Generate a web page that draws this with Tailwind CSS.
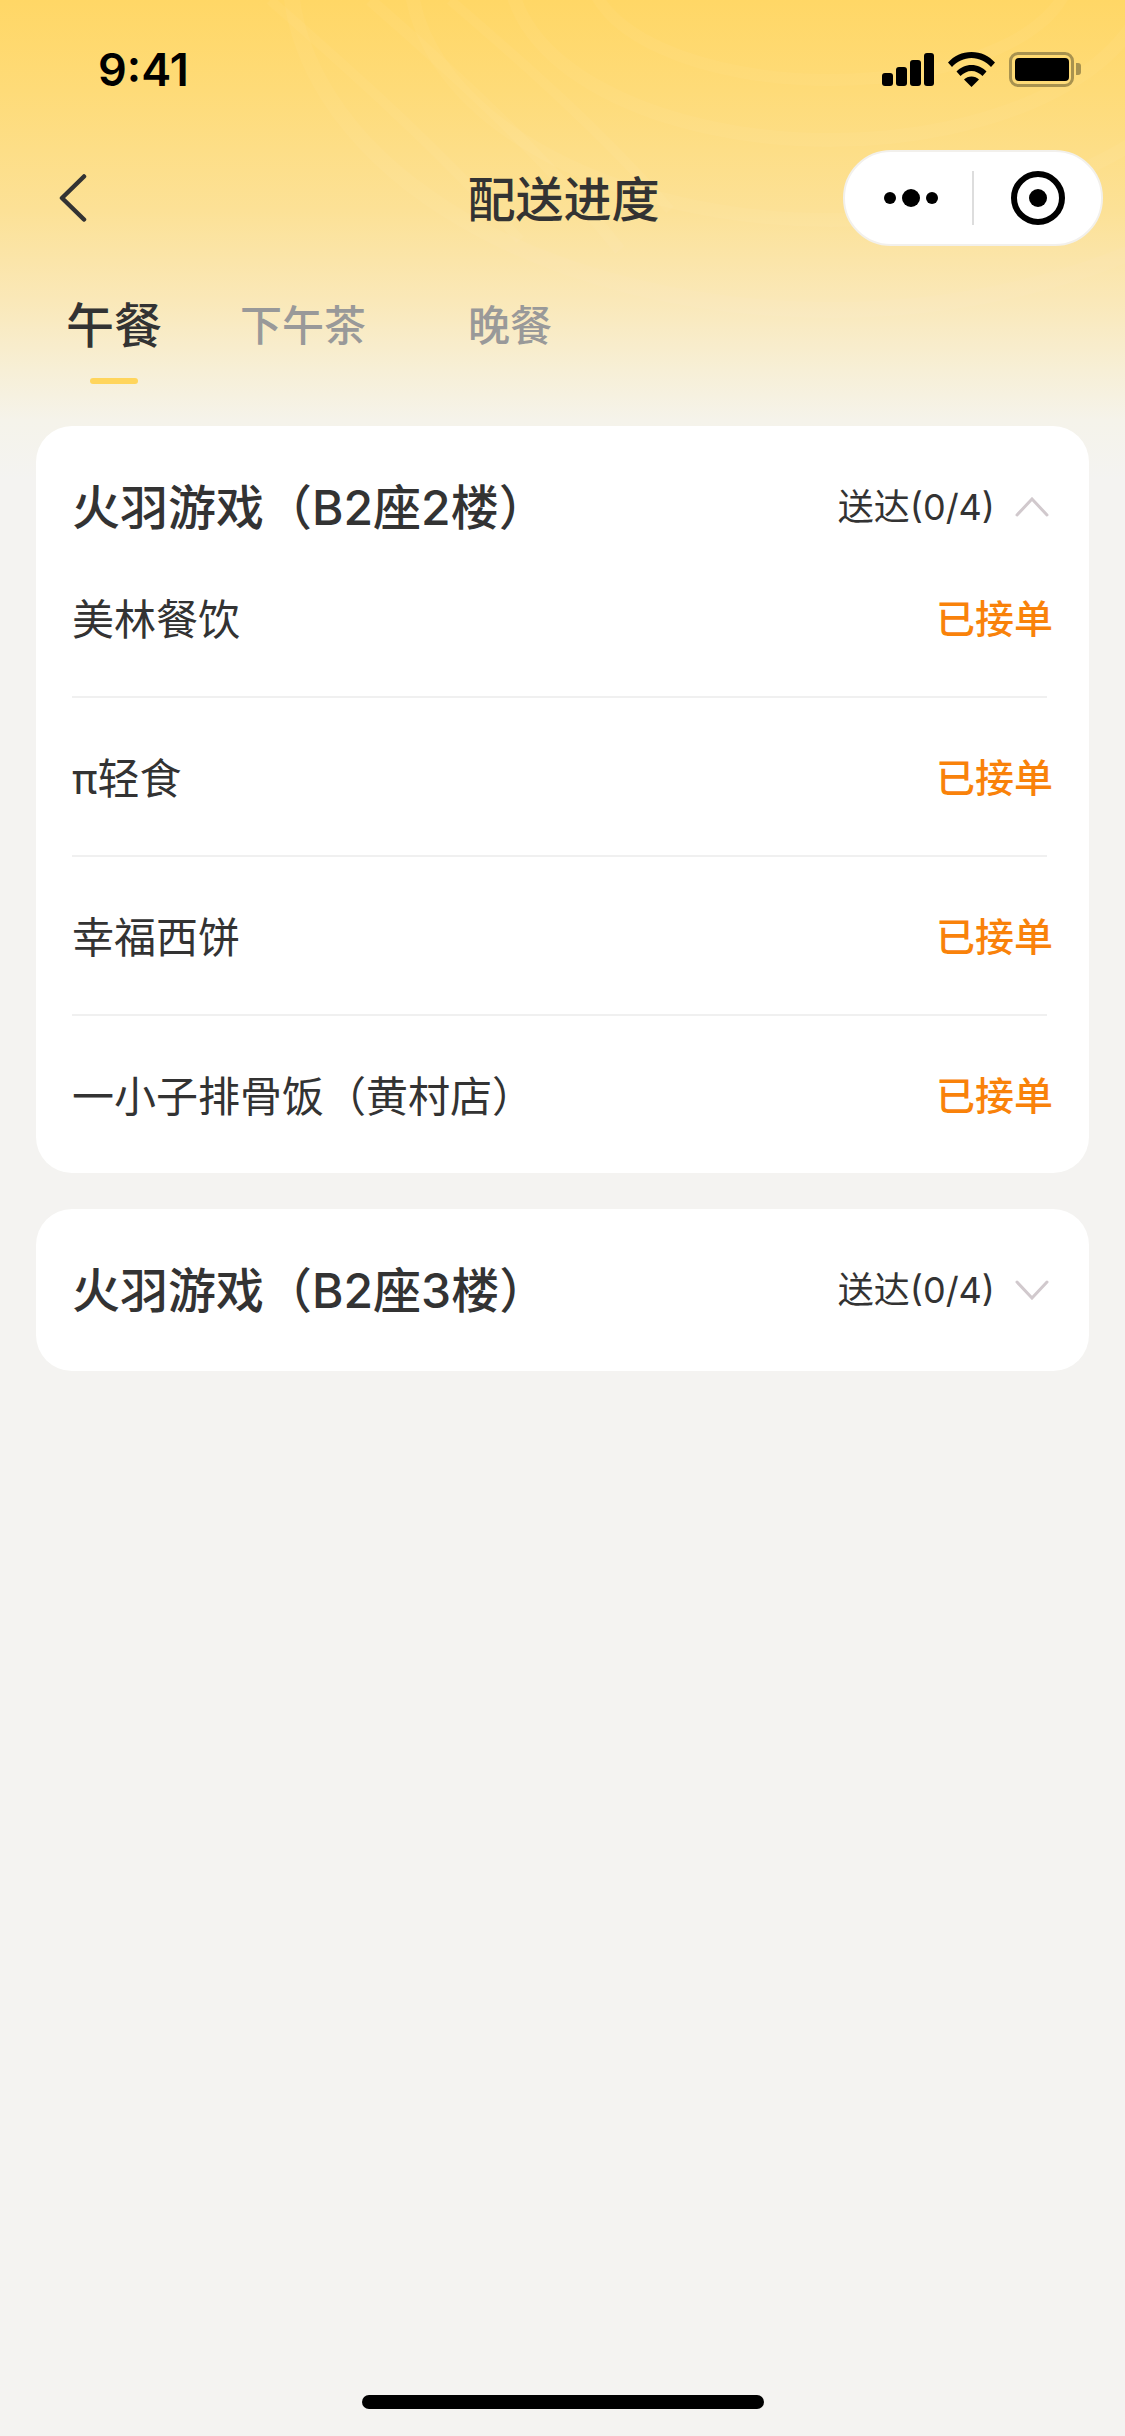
<!DOCTYPE html>
<html lang="zh-CN">
<head>
<meta charset="utf-8">
<script src="https://cdn.jsdelivr.net/npm/@tailwindcss/browser@4"></script>
</head>
<body class="m-0">
<div class="relative flex flex-col w-[1125px] h-[2436px] overflow-hidden text-[#333] bg-[#f4f3f1] bg-no-repeat bg-[linear-gradient(180deg,#ffd766_0px,#fedb78_90px,#fce196_210px,#fae8b8_300px,#f7efd6_370px,#f5f3ea_420px,#f4f3f1_480px)] font-['Inter','Noto_Sans_CJK_SC',sans-serif]">
  <!-- faint sweep lines in the header backdrop -->
  <svg class="absolute left-0 top-0 pointer-events-none" width="1125" height="420" viewBox="0 0 1125 420" fill="none" stroke="#fff" stroke-opacity="0.035">
    <path stroke-width="10" d="M270 0C350 70 440 150 520 240"/>
    <path stroke-width="12" d="M370 0C450 70 540 150 620 250"/>
    <path stroke-width="10" d="M450 0C520 60 600 130 670 210"/>
    <ellipse stroke-width="12" cx="830" cy="-30" rx="240" ry="110"/>
    <ellipse stroke-width="14" cx="830" cy="-30" rx="320" ry="170"/>
    <ellipse stroke-width="14" cx="830" cy="-30" rx="420" ry="250"/>
    <ellipse stroke-width="16" cx="830" cy="-30" rx="540" ry="340"/>
  </svg>
  <!-- status bar -->
  <div class="relative flex items-center justify-between h-[138px] pl-[98px] pr-[44px] shrink-0">
    <span class="font-['Inter',sans-serif] font-semibold text-[45px] leading-none text-black">9:41</span>
    <div class="flex items-center gap-[14px]">
      <svg width="52" height="33" viewBox="0 0 52 33" fill="#000">
        <rect x="0" y="20" width="11" height="13" rx="3"/>
        <rect x="14" y="14" width="11" height="19" rx="3"/>
        <rect x="28" y="7" width="11" height="26" rx="3"/>
        <rect x="42" y="0" width="10" height="33" rx="3"/>
      </svg>
      <svg width="47" height="35" viewBox="0 0 47 35" fill="#000">
        <path d="M0 10.500C6 4 14 0 23.500 0S41 4 47 10.500L43 15C38 9.500 31 6 23.500 6S9 9.500 4 15Z"/>
        <path d="M8.500 19.500C12.500 15.500 17.500 13 23.500 13S34.500 15.500 38.500 19.500L34.500 24C31.500 21 27.500 19 23.500 19S15.500 21 12.500 24Z"/>
        <path d="M16 27.500C18 25.500 20.500 24.500 23.500 24.500S29 25.500 31 27.500L23.500 35Z"/>
      </svg>
      <div class="flex items-center">
        <div class="flex items-center justify-center w-[65px] h-[35px] rounded-[9px] border-[3px] border-[#a8924f]">
          <div class="w-[54px] h-[23px] rounded-[4px] bg-black"></div>
        </div>
        <div class="w-[5px] h-[12px] ml-[2px] rounded-r-[3px] bg-[#a8924f]"></div>
      </div>
    </div>
  </div>
  <!-- nav -->
  <div class="relative flex items-center justify-between h-[118px] pl-[59px] pr-[22px] shrink-0">
    <svg class="mt-[1px]" width="28" height="48" viewBox="0 0 28 48" fill="none" stroke="#333" stroke-width="4.500" stroke-linecap="round" stroke-linejoin="round"><path d="M25 2.500 3 24l22 21.500"/></svg>
    <span class="absolute left-[2px] right-0 top-[32px] text-center text-[48px] leading-[60px] font-medium">配送进度</span>
    <div class="relative flex items-center w-[260px] h-[96px] mt-[2px] rounded-full bg-white border-2 border-[#f2f0ec]">
      <div class="flex items-center justify-center gap-[6px] w-[129px] h-[54px] border-r-2 border-[#ddd] pl-[4px]">
        <span class="w-[12px] h-[12px] rounded-full bg-black"></span>
        <span class="w-[18px] h-[18px] rounded-full bg-black"></span>
        <span class="w-[12px] h-[12px] rounded-full bg-black"></span>
      </div>
      <div class="flex items-center justify-center w-[54px] h-[54px] ml-[37px] rounded-full border-[6px] border-black">
        <span class="w-[18px] h-[18px] rounded-full bg-black"></span>
      </div>
    </div>
  </div>
  <!-- tabs -->
  <div class="relative flex items-start h-[170px] pl-[66px] pt-[40px] shrink-0">
    <div class="flex flex-col items-center mr-[78px]">
      <span class="text-[48px] leading-[60px] font-medium">午餐</span>
      <span class="w-[48px] h-[6px] mt-[22px] rounded-full bg-[#ffd55c]"></span>
    </div>
    <span class="text-[42px] leading-[60px] font-medium text-[#999] mr-[102px]">下午茶</span>
    <span class="text-[42px] leading-[60px] font-medium text-[#999]">晚餐</span>
  </div>
  <!-- card 1 -->
  <div class="relative mx-[36px] pl-[36px] pt-[57px] rounded-[36px] bg-white shrink-0">
    <div class="flex items-center justify-between h-[48px] pr-[40px]">
      <span class="pt-[2px] text-[48px] leading-[48px] font-medium">火羽游戏（B2座2楼）</span>
      <div class="flex items-center">
        <span class="text-[36px] leading-[48px]">送达(0/4)</span>
        <svg class="ml-[20px]" width="34" height="20" viewBox="0 0 34 20" fill="none" stroke="#d1c9cd" stroke-width="3" stroke-linecap="round"><path d="M2 18 17 2l15 16"/></svg>
      </div>
    </div>
    <div class="mt-[6px] flex flex-col">
      <div class="flex items-center justify-between h-[159px] pt-[5px] pr-[36px]"><span class="text-[42px]">美林餐饮</span><span class="text-[39px] font-medium text-[#f9820a]">已接单</span></div>
      <div class="h-[2px] mr-[42px] bg-[#f0f0f0]"></div>
      <div class="flex items-center justify-between h-[157px] pt-[3px] pr-[36px]"><span class="text-[42px]">π轻食</span><span class="text-[39px] font-medium text-[#f9820a]">已接单</span></div>
      <div class="h-[2px] mr-[42px] bg-[#f0f0f0]"></div>
      <div class="flex items-center justify-between h-[157px] pt-[3px] pr-[36px]"><span class="text-[42px]">幸福西饼</span><span class="text-[39px] font-medium text-[#f9820a]">已接单</span></div>
      <div class="h-[2px] mr-[42px] bg-[#f0f0f0]"></div>
      <div class="flex items-center justify-between h-[157px] pt-[3px] pr-[36px]"><span class="text-[42px]">一小子排骨饭（黄村店）</span><span class="text-[39px] font-medium text-[#f9820a]">已接单</span></div>
    </div>
  </div>
  <!-- card 2 -->
  <div class="relative mx-[36px] mt-[36px] pl-[36px] py-[57px] rounded-[36px] bg-white shrink-0">
    <div class="flex items-center justify-between h-[48px] pr-[40px]">
      <span class="pt-[2px] text-[48px] leading-[48px] font-medium">火羽游戏（B2座3楼）</span>
      <div class="flex items-center">
        <span class="text-[36px] leading-[48px]">送达(0/4)</span>
        <svg class="ml-[20px]" width="34" height="20" viewBox="0 0 34 20" fill="none" stroke="#d1c9cd" stroke-width="3" stroke-linecap="round"><path d="M2 2l15 16L32 2"/></svg>
      </div>
    </div>
  </div>
  <!-- home indicator -->
  <div class="relative self-center w-[402px] h-[14px] mt-auto mb-[27px] rounded-full bg-black shrink-0"></div>
</div>
</body>
</html>
